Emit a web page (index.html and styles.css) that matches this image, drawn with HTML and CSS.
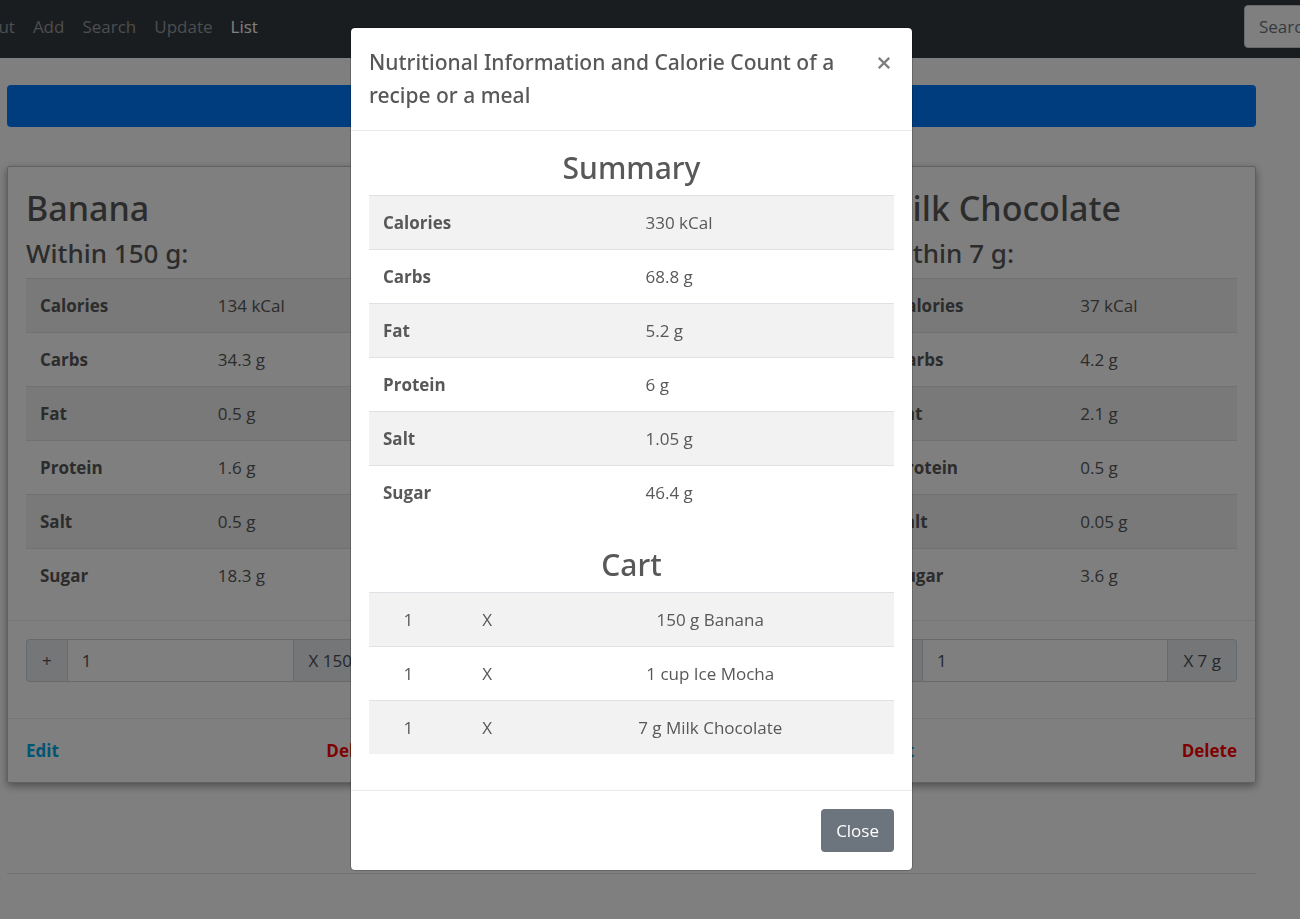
FILE: index.html
```html
<!DOCTYPE html>
<html lang="en">
<head>
<meta charset="utf-8">
<meta name="viewport" content="width=device-width, initial-scale=1">
<title>Calorie Counter</title>
<link rel="stylesheet" href="styles.css">
</head>
<body>
<header class="navbar">
  <nav class="nav-links">
    <a class="nav-link" href="#about">About</a>
    <a class="nav-link" href="#add">Add</a>
    <a class="nav-link" href="#search">Search</a>
    <a class="nav-link" href="#update">Update</a>
    <a class="nav-link active" href="#list">List</a>
  </nav>
  <input class="control nav-search" type="search" placeholder="Search" aria-label="Search">
</header>

<main class="page">
  <button class="summary-button" type="button" aria-label="Show summary"></button>
  <div class="cards">
    <article class="card">
      <div class="card-body">
        <h2 class="card-title">Banana</h2>
        <h4 class="card-subtitle">Within 150 g:</h4>
        <table class="table">
          <tbody>
            <tr><th scope="row">Calories</th><td>134 kCal</td></tr>
            <tr><th scope="row">Carbs</th><td>34.3 g</td></tr>
            <tr><th scope="row">Fat</th><td>0.5 g</td></tr>
            <tr><th scope="row">Protein</th><td>1.6 g</td></tr>
            <tr><th scope="row">Salt</th><td>0.5 g</td></tr>
            <tr><th scope="row">Sugar</th><td>18.3 g</td></tr>
          </tbody>
        </table>
      </div>
      <div class="card-quantity">
        <div class="input-group">
          <button class="addon" type="button">+</button>
          <input class="control" type="text" value="1" aria-label="Banana quantity">
          <span class="addon">X 150 g</span>
        </div>
      </div>
      <div class="card-actions">
        <a class="edit" href="#edit">Edit</a>
        <a class="delete" href="#delete">Delete</a>
      </div>
    </article>
    <article class="card card-last">
      <div class="card-body">
        <h2 class="card-title">Milk Chocolate</h2>
        <h4 class="card-subtitle">Within 7 g:</h4>
        <table class="table table-wide-label">
          <tbody>
            <tr><th scope="row">Calories</th><td>37 kCal</td></tr>
            <tr><th scope="row">Carbs</th><td>4.2 g</td></tr>
            <tr><th scope="row">Fat</th><td>2.1 g</td></tr>
            <tr><th scope="row">Protein</th><td>0.5 g</td></tr>
            <tr><th scope="row">Salt</th><td>0.05 g</td></tr>
            <tr><th scope="row">Sugar</th><td>3.6 g</td></tr>
          </tbody>
        </table>
      </div>
      <div class="card-quantity">
        <div class="input-group">
          <button class="addon" type="button">+</button>
          <input class="control" type="text" value="1" aria-label="Milk Chocolate quantity">
          <span class="addon">X 7 g</span>
        </div>
      </div>
      <div class="card-actions">
        <a class="edit" href="#edit">Edit</a>
        <a class="delete" href="#delete">Delete</a>
      </div>
    </article>
  </div>
  <hr class="divider">
</main>

<div class="backdrop">
  <section class="modal" role="dialog" aria-modal="true" aria-labelledby="modal-title">
    <header class="modal-header">
      <h5 class="modal-title" id="modal-title">Nutritional Information and Calorie Count of a recipe or a meal</h5>
      <button class="dismiss" type="button" aria-label="Dismiss">
        <svg width="12" height="12" viewBox="0 0 12 12" aria-hidden="true"><path d="M.8.8l10.4 10.4M11.2.8L.8 11.2" fill="none" stroke="currentColor" stroke-width="2.3"/></svg>
      </button>
    </header>
    <div class="modal-body">
      <h3 class="section-title">Summary</h3>
      <table class="table">
        <tbody>
          <tr><th scope="row">Calories</th><td>330 kCal</td></tr>
          <tr><th scope="row">Carbs</th><td>68.8 g</td></tr>
          <tr><th scope="row">Fat</th><td>5.2 g</td></tr>
          <tr><th scope="row">Protein</th><td>6 g</td></tr>
          <tr><th scope="row">Salt</th><td>1.05 g</td></tr>
          <tr><th scope="row">Sugar</th><td>46.4 g</td></tr>
        </tbody>
      </table>
      <h3 class="section-title cart-title">Cart</h3>
      <table class="table cart">
        <tbody>
          <tr><td>1</td><td>X</td><td>150 g Banana</td></tr>
          <tr><td>1</td><td>X</td><td>1 cup Ice Mocha</td></tr>
          <tr><td>1</td><td>X</td><td>7 g Milk Chocolate</td></tr>
        </tbody>
      </table>
    </div>
    <footer class="modal-footer">
      <button class="close-button" type="button">Close</button>
    </footer>
  </section>
</div>
</body>
</html>
```
FILE: styles.css
```css
*, *::before, *::after { box-sizing: border-box; }

body {
  margin: 0;
  background: #fff;
  color: #585858;
  font-family: "Segoe UI", "Open Sans", "Noto Sans", sans-serif;
  font-size: 17px;
  line-height: 27px;
  overflow: hidden;
}

h2, h3, h4, h5 {
  margin: 0;
  font-family: "Segoe UI", "Noto Sans", "Open Sans", sans-serif;
  font-weight: 500;
}
button, input { font: inherit; color: inherit; }
a { text-decoration: none; }

/* Top navigation */
.navbar {
  display: flex;
  align-items: center;
  justify-content: space-between;
  padding: 5px 0 10px;
  background: #343a40;
  overflow: hidden;
}
.nav-links { display: flex; gap: 18px; margin-left: -33px; }
.nav-link { color: #999c9f; }
.nav-link.active { color: #fff; }

.control {
  min-width: 0;
  height: 43px;
  padding: 0 14px;
  border: 1px solid #ced4da;
  background: #fff;
  color: #495057;
}
.nav-search {
  flex: none;
  width: 220px;
  margin-right: -164px;
  border-radius: 4px;
}
.nav-search::placeholder { color: #6c757d; opacity: 1; }

/* Food list */
.page { padding: 27px 44px 45px 7px; }
.summary-button {
  display: block;
  width: 100%;
  height: 42px;
  border: 0;
  border-radius: 4px;
  background: #007bff;
}
.cards {
  display: grid;
  grid-template-columns: repeat(3, 1fr);
  gap: 34px;
  margin-top: 39px;
}
.card {
  border: 1px solid #c0c0c0;
  border-radius: 2px;
  box-shadow: 0 3px 9px rgba(0, 0, 0, 0.4);
}
.card-last { grid-column: 3; }
.card-body { padding: 18px; }
.card-title { margin-bottom: 6px; font-size: 34px; line-height: 46px; }
.card-subtitle { margin-bottom: 8px; font-size: 26px; line-height: 33px; }
.card-quantity { padding: 18px 18px 36px; border-top: 1px solid #ececec; }
.card-actions {
  display: flex;
  justify-content: space-between;
  padding: 18px;
  border-top: 1px solid #ececec;
  font-weight: 700;
}
.edit { color: #00a8e8; }
.delete { color: #f00; }

.input-group { display: flex; }
.input-group .control { flex: 1; width: 0; }
.addon {
  height: 43px;
  padding: 7px 15px;
  border: 1px solid #ced4da;
  background: #e9ecef;
  color: #495057;
}
.addon:first-child { border-right: 0; border-radius: 4px 0 0 4px; }
.addon:last-child { border-left: 0; border-radius: 0 4px 4px 0; }

.divider { margin: 90px 0 0; border: 0; border-top: 1px solid #e5e5e5; }

/* Tables */
.table { width: 100%; border-collapse: separate; border-spacing: 0; table-layout: fixed; }
.table th, .table td {
  padding: 13px 14px;
  border-top: 1px solid #dee2e6;
  text-align: left;
}
.table th { width: 50%; font-weight: 700; }
.table-wide-label th { width: 52%; }
.table tr:nth-child(odd) { background: #f2f2f2; }
.cart td { width: 15%; text-align: center; }
.cart td:last-child { width: 70%; }

/* Modal */
.backdrop {
  position: fixed;
  inset: 0;
  padding: 27px 37px 27px 0;
  background: rgba(0, 0, 0, 0.5);
  overflow: hidden;
}
.modal {
  max-width: 563px;
  margin: 0 auto;
  border: 1px solid rgba(0, 0, 0, 0.2);
  border-radius: 5px;
  background: #fff;
  background-clip: padding-box;
}
.modal-header {
  display: flex;
  align-items: flex-start;
  justify-content: space-between;
  padding: 18px;
  border-bottom: 1px solid #e9ecef;
}
.modal-title { font-size: 21px; line-height: 33px; }
.dismiss {
  display: flex;
  padding: 11px 4px;
  border: 0;
  background: none;
  color: #808080;
}
.modal-body { padding: 18px 18px 36px; }
.section-title { margin-bottom: 8px; font-size: 30px; line-height: 38px; text-align: center; }
.cart-title { margin-top: 27px; }
.modal-footer {
  display: flex;
  justify-content: flex-end;
  padding: 18px;
  border-top: 1px solid #e9ecef;
}
.close-button {
  height: 43px;
  padding: 0 15px;
  border: 0;
  border-radius: 4px;
  background: #6c757d;
  color: #fff;
}
```
